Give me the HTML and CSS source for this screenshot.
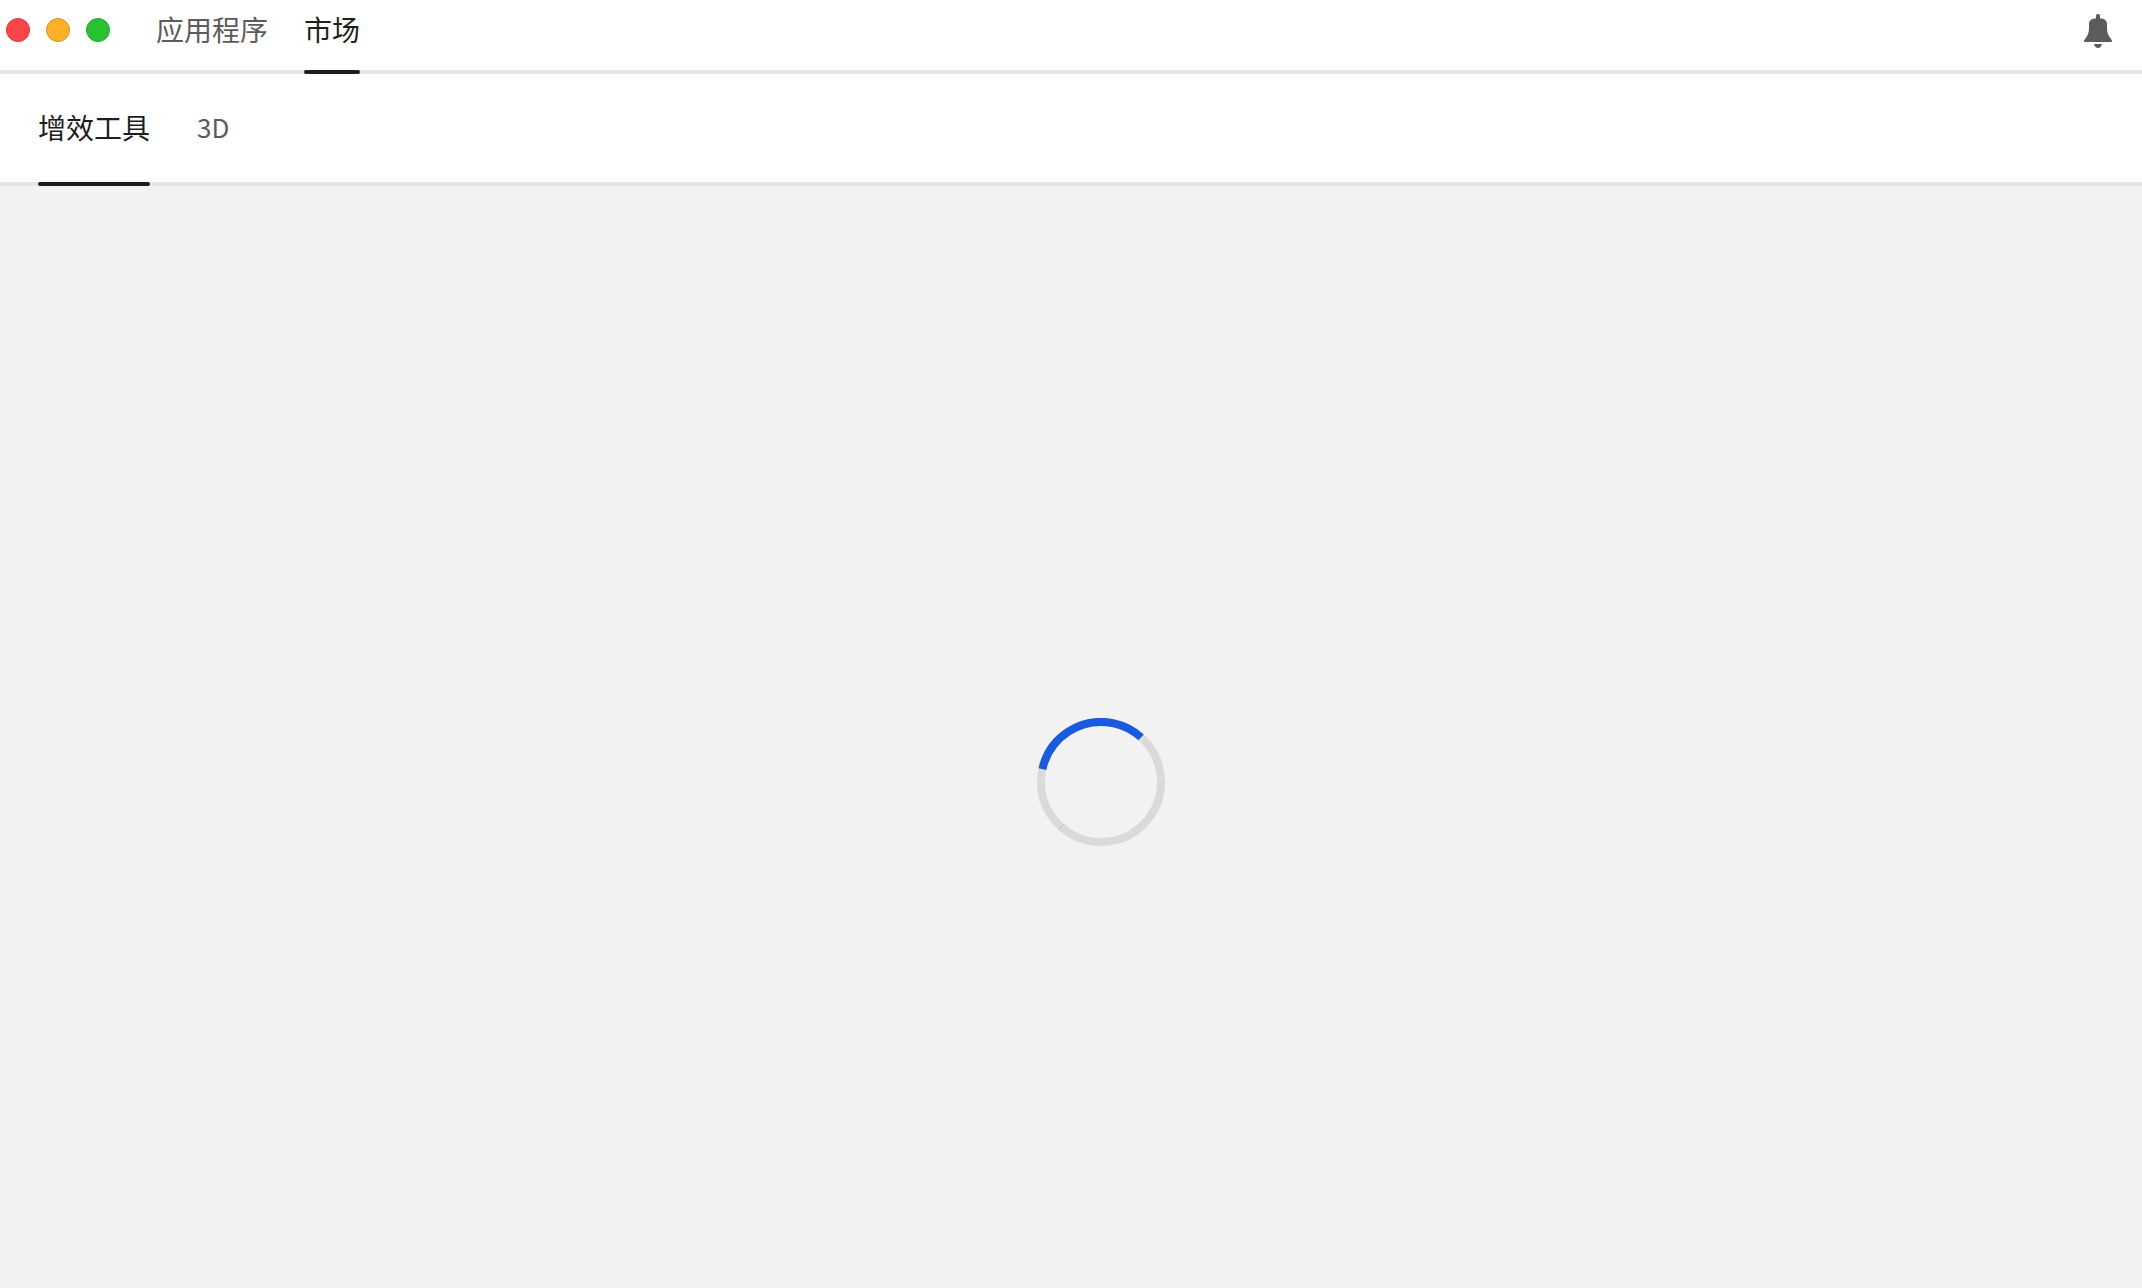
FILE: index.html
```html
<!DOCTYPE html>
<html lang="zh-CN">
<head>
    <meta charset="UTF-8">
    <title>市场</title>
    <link rel="stylesheet" href="styles.css">
</head>
<body>
    <header class="titlebar">
        <div class="window-controls">
            <button class="dot close" aria-label="关闭"></button>
            <button class="dot minimize" aria-label="最小化"></button>
            <button class="dot maximize" aria-label="缩放"></button>
        </div>
        <nav class="tabs main-tabs">
            <a class="tab" href="#apps">应用程序</a>
            <a class="tab active" href="#market">市场</a>
        </nav>
        <button class="bell" aria-label="通知">
            <svg width="28" height="34" viewBox="0 0 28 34">
                <path d="M12 5V1.5Q12 0 14 0T16 1.5V4.5C20.500 4.500 23 6.500 23 10V14C23 19 24.500 22 27 25Q28 26 28 28H0Q0 26 1 25C3.500 22 5 19 5 14V10C5 6.500 7.500 4.500 12 4.500Z"/>
                <path d="M10 30H18Q17 34 14 34T10 30Z"/>
            </svg>
        </button>
    </header>
    <nav class="tabs sub-tabs">
        <a class="tab active" href="#plugins">增效工具</a>
        <a class="tab latin" href="#3d">3D</a>
    </nav>
    <main class="content">
        <svg class="spinner" width="128" height="128" viewBox="0 0 128 128" role="img" aria-label="正在加载">
            <circle class="track" cx="64" cy="64" r="60"/>
            <circle class="arc" cx="64" cy="64" r="60" pathLength="360" transform="rotate(-167.5 64 64)"/>
            <path class="seam" d="M21 112L27 106"/>
        </svg>
    </main>
</body>
</html>
```
FILE: styles.css
```css
* {
    box-sizing: border-box;
}

body {
    display: flex;
    flex-direction: column;
    min-height: 100vh;
    margin: 0;
    background: #f2f2f2;
    font-family: "Noto Sans CJK SC", sans-serif;
    font-size: 28px;
    line-height: 38px;
}

button {
    padding: 0;
    border: 0;
    background: none;
}

.titlebar {
    display: flex;
    align-items: flex-start;
    padding: 10px 30px 0 6px;
    background: #fff;
    border-bottom: 4px solid #e4e4e4;
}

.window-controls {
    display: flex;
    align-items: center;
    gap: 16px;
    height: 40px;
    margin-right: 46px;
}

.dot {
    width: 24px;
    height: 24px;
    border: 1px solid;
    border-radius: 50%;
}

.close {
    background: #fc4548;
    border-color: #e0383c;
}

.minimize {
    background: #fdb028;
    border-color: #dc9420;
}

.maximize {
    background: #28c231;
    border-color: #20a828;
}

.tabs {
    display: flex;
}

.main-tabs {
    gap: 36px;
}

.main-tabs .tab {
    padding-bottom: 22px;
}

.sub-tabs {
    gap: 47px;
    padding: 0 38px;
    background: #fff;
    border-bottom: 4px solid #e4e4e4;
}

.sub-tabs .tab {
    padding: 34px 0 36px;
}

.tab {
    position: relative;
    color: #5c5c5c;
    text-decoration: none;
}

.tab.active {
    color: #1e1e1e;
}

.tab.active::after {
    content: "";
    position: absolute;
    left: 0;
    right: 0;
    bottom: -4px;
    height: 4px;
    border-radius: 2px;
    background: #1e1e1e;
}

.latin {
    font-size: 26px;
}

.bell {
    margin: 4px 0 0 auto;
}

.bell svg {
    display: block;
    fill: #5c5c5c;
}

.content {
    display: flex;
    flex: 1;
    align-items: center;
    justify-content: center;
    padding: 90px 0 0 60px;
}

.spinner circle {
    fill: none;
    stroke-width: 8;
}

.spinner .track {
    stroke: #dadada;
}

.spinner .arc {
    stroke: #185be0;
    stroke-dasharray: 119.5 240.5;
}

.spinner .seam {
    stroke: #a3b5d9;
    stroke-width: 0.5;
}
```
